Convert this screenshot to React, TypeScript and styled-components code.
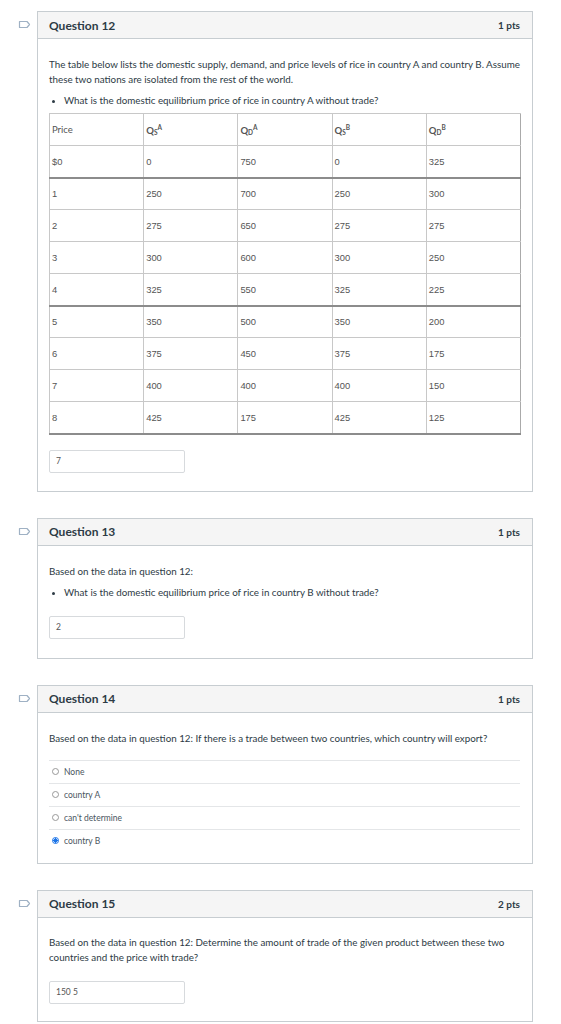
import React from 'react';
import styled, { createGlobalStyle } from 'styled-components';

const GlobalStyle = createGlobalStyle`
  body {
    margin: 0;
    background: #fff;
    font-family: Lato, "Open Sans", sans-serif;
    color: #2d3b45;
  }
`;

const Page = styled.div`
  width: 561px;
  padding: 11px 0 0 0;
  display: flex;
  flex-direction: column;
  gap: 26px;
`;

const QuestionRow = styled.div`
  display: flex;
  align-items: flex-start;
`;

const MarkCol = styled.div`
  width: 37px;
  display: flex;
  justify-content: flex-end;
  padding: 9px 6px 0 0;
  box-sizing: border-box;
`;

const Card = styled.section`
  width: 496px;
  border: 1px solid #c7cdd1;
  box-sizing: border-box;
  background: #fff;
`;

const Header = styled.header`
  height: 26px;
  background: #f5f5f5;
  border-bottom: 1px solid #c7cdd1;
  display: flex;
  align-items: center;
  justify-content: space-between;
  padding: 0 12px 0 11px;
`;

const Title = styled.h3`
  margin: 0;
  font-size: 12px;
  font-weight: 700;
  color: #2d3b45;
`;

const Points = styled.span`
  font-size: 10px;
  font-weight: 700;
  color: #2d3b45;
`;

const Body = styled.div<{ $top?: number; $bottom?: number }>`
  padding: ${p => p.$top ?? 18}px 12px ${p => p.$bottom ?? 18}px 11px;
`;

const Text = styled.p`
  margin: 0;
  font-size: 9.8px;
  line-height: 15px;
  color: #2d3b45;
`;

const Bullets = styled.ul`
  margin: 6px 0 0 0;
  padding-left: 15px;
  font-size: 9.8px;
  line-height: 15px;
  color: #2d3b45;

  li::marker {
    font-size: 8px;
  }
`;

const Table = styled.table`
  margin-top: 5px;
  width: 472px;
  border-collapse: collapse;
  table-layout: fixed;
  border-left: 1px solid #aaa;
  border-right: 1px solid #aaa;
`;

const Cell = styled.td<{ $head?: boolean; $strong?: boolean }>`
  height: 32px;
  box-sizing: border-box;
  padding: 0 2px;
  border-left: 1px solid #c8c8c8;
  border-top: 1px solid #c8c8c8;
  border-bottom: ${p => (p.$strong ? '2px solid #8c8c8c' : '1px solid #c8c8c8')};
  font-family: ${p => (p.$head ? 'Lato, sans-serif' : '"Liberation Sans", Arial, sans-serif')};
  font-size: ${p => (p.$head ? '9.5px' : '9.4px')};
  font-weight: ${p => (p.$head ? 700 : 400)};
  color: #555;
  text-align: left;
  vertical-align: middle;
`;

const Sub = styled.sub`
  font-size: 6.5px;
  vertical-align: -1px;
`;

const Sup = styled.sup`
  font-size: 6.5px;
  vertical-align: 4px;
`;

const Answer = styled.div<{ $top: number }>`
  margin-top: ${p => p.$top}px;
  width: 136px;
  height: 23px;
  box-sizing: border-box;
  border: 1px solid #d7dadd;
  border-radius: 2px;
  padding: 0 6px;
  display: flex;
  align-items: center;
  font-size: 8.5px;
  color: #555;
`;

const Options = styled.div`
  margin-top: 14px;
`;

const Option = styled.div`
  height: 22px;
  border-top: 1px solid #e4e6e8;
  display: flex;
  align-items: center;
  gap: 5px;
  padding-left: 3px;
  font-size: 8.5px;
  color: #4a5560;
`;

const Radio = styled.span<{ $on?: boolean }>`
  width: 7px;
  height: 7px;
  border-radius: 50%;
  box-sizing: border-box;
  border: 1px solid ${p => (p.$on ? '#1a73e8' : '#999')};
  background: ${p => (p.$on ? 'radial-gradient(circle, #1a73e8 0 2px, #fff 2.2px)' : '#fff')};
`;

const Mark = () => (
  <svg width="13" height="9" viewBox="0 0 13 9">
    <path d="M1.5 1.5 H9 L11.5 4.5 L9 7.5 H1.5 Z" fill="none" stroke="#9fb1c4" strokeWidth="1.2" strokeLinejoin="round" />
  </svg>
);

const Q = ({ s, c }: { s: string; c: string }) => (
  <>Q<Sub>{s}</Sub><Sup>{c}</Sup></>
);

const rows = [
  ['$0', '0', '750', '0', '325'],
  ['1', '250', '700', '250', '300'],
  ['2', '275', '650', '275', '275'],
  ['3', '300', '600', '300', '250'],
  ['4', '325', '550', '325', '225'],
  ['5', '350', '500', '350', '200'],
  ['6', '375', '450', '375', '175'],
  ['7', '400', '400', '400', '150'],
  ['8', '425', '175', '425', '125'],
];

function Question({ n, pts, children }: { n: number; pts: number; children: React.ReactNode }) {
  return (
    <QuestionRow>
      <MarkCol><Mark /></MarkCol>
      <Card>
        <Header>
          <Title>Question {n}</Title>
          <Points>{pts} pts</Points>
        </Header>
        {children}
      </Card>
    </QuestionRow>
  );
}

export default function App() {
  return (
    <>
      <GlobalStyle />
      <Page>
        <Question n={12} pts={1}>
          <Body>
            <Text>
              The table below lists the domestic supply, demand, and price levels of rice in country A and country B. Assume
              these two nations are isolated from the rest of the world.
            </Text>
            <Bullets>
              <li>What is the domestic equilibrium price of rice in country A without trade?</li>
            </Bullets>
            <Table>
              <tbody>
                <tr>
                  <Cell $head style={{ fontWeight: 400 }}>Price</Cell>
                  <Cell $head><Q s="S" c="A" /></Cell>
                  <Cell $head><Q s="D" c="A" /></Cell>
                  <Cell $head><Q s="S" c="B" /></Cell>
                  <Cell $head><Q s="D" c="B" /></Cell>
                </tr>
                {rows.map((r, i) => (
                  <tr key={i}>
                    {r.map((v, j) => (
                      <Cell key={j} $strong={i === 0 || i === 4 || i === 8}>{v}</Cell>
                    ))}
                  </tr>
                ))}
              </tbody>
            </Table>
            <Answer $top={15}>7</Answer>
          </Body>
        </Question>

        <Question n={13} pts={1}>
          <Body $bottom={19}>
            <Text>Based on the data in question 12:</Text>
            <Bullets>
              <li>What is the domestic equilibrium price of rice in country B without trade?</li>
            </Bullets>
            <Answer $top={16}>2</Answer>
          </Body>
        </Question>

        <Question n={14} pts={1}>
          <Body $bottom={11}>
            <Text>Based on the data in question 12: If there is a trade between two countries, which country will export?</Text>
            <Options>
              <Option><Radio />None</Option>
              <Option><Radio />country A</Option>
              <Option><Radio />can't determine</Option>
              <Option><Radio $on />country B</Option>
            </Options>
          </Body>
        </Question>

        <Question n={15} pts={2}>
          <Body $top={17} $bottom={17}>
            <Text>
              Based on the data in question 12: Determine the amount of trade of the given product between these two
              countries and the price with trade?
            </Text>
            <Answer $top={16}>150 5</Answer>
          </Body>
        </Question>
      </Page>
    </>
  );
}
